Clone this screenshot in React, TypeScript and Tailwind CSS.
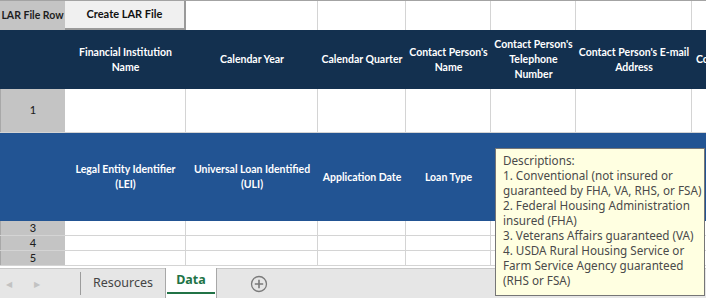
import React from "react";

const cols = [
  "w-[65px]",
  "w-[121px]",
  "w-[132px]",
  "w-[88px]",
  "w-[85px]",
  "w-[85px]",
  "w-[116px]",
  "w-[60px]",
];

const navyHeads: React.ReactNode[] = [
  "",
  <>Financial Institution<br />Name</>,
  "Calendar Year",
  "Calendar Quarter",
  <>Contact Person's<br />Name</>,
  <>Contact Person's<br />Telephone<br />Number</>,
  <>Contact Person's E-mail<br />Address</>,
  "Contact Person's Office Street Address",
];

// columns F-H sit under the comment box, so they stay blank here
const blueHeads: React.ReactNode[] = [
  "",
  <>Legal Entity Identifier<br />(LEI)</>,
  <>Universal Loan Identified<br />(ULI)</>,
  "Application Date",
  "Loan Type",
  "",
  "",
  "",
];

const commentLines = [
  "Descriptions:",
  "1. Conventional (not insured or",
  "guaranteed by FHA, VA, RHS, or FSA)",
  "2. Federal Housing Administration",
  "insured (FHA)",
  "3. Veterans Affairs guaranteed (VA)",
  "4. USDA Rural Housing Service or",
  "Farm Service Agency guaranteed",
  "(RHS or FSA)",
];

function HeaderRow({ heads, tone }: { heads: React.ReactNode[]; tone: "navy" | "blue" }) {
  return (
    <div
      className={
        tone === "navy"
          ? "flex h-[59px] shrink-0 bg-[#13304f]"
          : "flex h-[88px] shrink-0 bg-[#225493]"
      }
    >
      {heads.map((h, i) => (
        <div
          key={i}
          className={`${cols[i]} shrink-0 flex items-center overflow-hidden ${
            i === 7 ? "justify-start pl-[4px]" : "justify-center"
          }`}
        >
          <span className="text-center text-[10.5px] leading-[15px] font-bold text-white whitespace-nowrap">
            {h}
          </span>
        </div>
      ))}
    </div>
  );
}

function DataRow({ label, height }: { label: string; height: string }) {
  return (
    <div className={`flex ${height} shrink-0 border-b border-[#d4d4d4]`}>
      <div className="w-[65px] shrink-0 bg-[#c4c4c4] flex items-center justify-center text-[11px] font-medium text-[#1e1e1e] border-l border-[#a8a8a8]">
        {label}
      </div>
      {cols.slice(1).map((c, i) => (
        <div key={i} className={`${c} shrink-0 border-r border-[#d4d4d4]`} />
      ))}
    </div>
  );
}

export default function App() {
  return (
    <div className="relative w-[706px] h-[298px] overflow-hidden bg-white font-['Lato','Liberation_Sans',sans-serif]">
      <div className="flex flex-col h-full">
        {/* top row with macro button */}
        <div className="flex h-[30px] shrink-0 border-t border-[#a3a3a3]">
          <div className="w-[65px] shrink-0 bg-[#c4c4c4] flex items-center justify-center text-[10.5px] font-bold text-[#1e1e1e] whitespace-nowrap">
            LAR File Row
          </div>
          <div className="w-[121px] shrink-0 bg-[#f0f0f0] border-r-2 border-b-2 border-[#9a9a9a] flex items-center justify-center text-[11px] font-bold text-[#111]">
            Create LAR File
          </div>
          {cols.slice(2).map((c, i) => (
            <div key={i} className={`${c} shrink-0 border-r border-[#d4d4d4]`} />
          ))}
        </div>

        <HeaderRow heads={navyHeads} tone="navy" />
        <DataRow label="1" height="h-[44px]" />
        <HeaderRow heads={blueHeads} tone="blue" />
        <DataRow label="3" height="h-[15px]" />
        <DataRow label="4" height="h-[15px]" />
        <DataRow label="5" height="h-[15px]" />
        <div className="flex-1" />

        {/* sheet tabs */}
        <div className="flex h-[30px] shrink-0 items-stretch bg-[#e6e6e6] border-t border-[#c8c8c8] font-['Noto_Sans','Open_Sans',sans-serif]">
          <div className="w-[80px] shrink-0 flex items-center gap-[22px] pl-[6px] text-[8px] text-[#c2c2c2]">
            <span>◀</span>
            <span>▶</span>
          </div>
          <div className="w-px my-[3px] bg-[#9c9c9c]" />
          <div className="w-[84px] flex items-center justify-center text-[12.5px] text-[#444]">
            Resources
          </div>
          <div className="w-[52px] -mt-px bg-white border-x border-[#a8a8a8] flex flex-col">
            <div className="flex-1 flex items-center justify-center text-[12.5px] font-bold text-[#217346]">
              Data
            </div>
            <div className="h-[2px] mx-[1px] mb-[4px] bg-[#217346]" />
          </div>
          <div className="flex items-center pl-[33px]">
            <svg width="18" height="18" viewBox="0 0 18 18">
              <circle cx="9" cy="9" r="7.5" fill="none" stroke="#7a7a7a" strokeWidth="1.3" />
              <path d="M9 4.8v8.4M4.8 9h8.4" stroke="#7a7a7a" strokeWidth="1.6" />
            </svg>
          </div>
        </div>
      </div>

      {/* cell comment tooltip */}
      <div className="absolute left-[495px] top-[148px] w-[210px] h-[148px] bg-[#ffffe1] border border-[#767676] pl-[7px] pt-[4px] text-[#4a4a4a] font-['Noto_Sans','Open_Sans',sans-serif]">
        {commentLines.map((line) => (
          <div key={line} className="h-[15px] text-[11.7px] leading-[15px] whitespace-nowrap">
            {line}
          </div>
        ))}
      </div>
    </div>
  );
}
